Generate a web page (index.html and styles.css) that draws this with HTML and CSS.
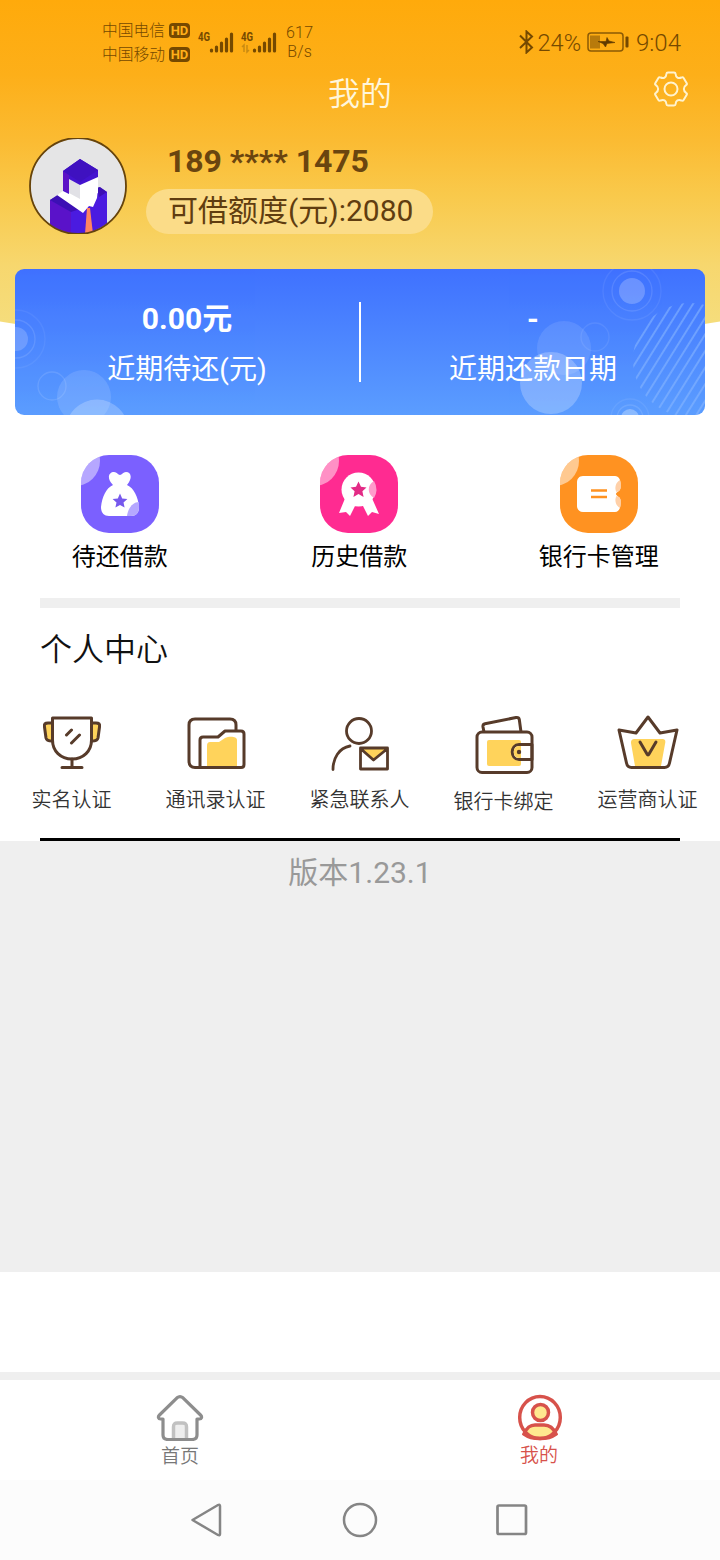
FILE: index.html
```html
<!DOCTYPE html>
<html lang="zh-CN">
<head>
<meta charset="utf-8">
<title>我的</title>
<link rel="stylesheet" href="styles.css">
</head>
<body>
<div class="screen">
  <header class="hero">
    <div class="status">
      <div class="carriers">
        <div class="carrier">中国电信<svg width="22" height="15" viewBox="0 0 22 15"><rect width="21" height="15" rx="4" fill="#754900"/><text x="10.5" y="12.3" class="hd">HD</text></svg></div>
        <div class="carrier">中国移动<svg width="22" height="15" viewBox="0 0 22 15"><rect width="21" height="15" rx="4" fill="#754900"/><text x="10.5" y="12.3" class="hd">HD</text></svg></div>
      </div>
      <svg class="signals" width="82" height="26" viewBox="0 0 82 26">
        <g fill="none" stroke="#754900" stroke-width="3.2" stroke-linecap="round">
          <path d="M14.500 22v-1M19.500 22v-4M24.500 22v-8M29.500 22v-12M34.500 22v-17"/>
          <path d="M57.500 22v-1M62.500 22v-4M67.500 22v-8M72.500 22v-12M77.500 22v-17"/>
        </g>
        <text x="1" y="11.500" class="g4" textLength="12" lengthAdjust="spacingAndGlyphs">4G</text>
        <text x="44" y="11.500" class="g4" textLength="12" lengthAdjust="spacingAndGlyphs">4G</text>
        <path d="M45 18l2-2v7M50 16v7l2-2" fill="none" stroke="#c98a12" stroke-width="1.500"/>
      </svg>
      <div class="speed">617<br>B/s</div>
      <div class="status-right">
        <svg width="17" height="24" viewBox="0 0 17 24"><path d="M2 5.500l12 12L8.500 22.500V1.500L14 6.500 2 18" fill="none" stroke="#754900" stroke-width="2"/></svg>
        <span class="pct">24%</span>
        <svg width="42" height="20" viewBox="0 0 42 20"><rect x="1" y="1" width="35" height="18" rx="3" fill="none" stroke="#8b5a05" stroke-width="1.500"/><rect x="3" y="3.500" width="10" height="13" fill="#b87a0b"/><path d="M11 9.500l8 0 1-4 2 3.500 6 1.500-8 1-1.500 3.500-2.500-3.500z" fill="#603a00" stroke="#603a00" stroke-width=".6"/><rect x="38.500" y="4.500" width="3" height="11" rx="1" fill="#754900"/></svg>
        <span class="clock">9:04</span>
      </div>
    </div>
    <div class="titlebar">
      <h1>我的</h1>
      <svg class="gear" width="36" height="36" viewBox="0 0 36 36"><g fill="none" stroke="#fff3cf" stroke-width="2" stroke-linejoin="round"><path d="M15 1.500h6q1.500 0 1.600 1.500c.2 3.500 2.800 5 5.800 3.500q1.400-.8 2.200.5l3 5q.8 1.400-.5 2.200c-3 2-3 5.600 0 7.600q1.300.8.5 2.200l-3 5q-.8 1.300-2.200.5c-3-1.500-5.600 0-5.800 3.500q-.1 1.500-1.600 1.500h-6q-1.500 0-1.600-1.500c-.2-3.500-2.800-5-5.800-3.500q-1.400.8-2.200-.5l-3-5q-.8-1.400.5-2.200c3-2 3-5.600 0-7.600q-1.300-.8-.5-2.200l3-5q.8-1.300 2.200-.5c3 1.500 5.600 0 5.800-3.500q.1-1.500 1.600-1.500z"/><circle cx="18" cy="18" r="6.500"/></g></svg>
    </div>
    <div class="profile">
      <svg class="avatar" width="98" height="96" viewBox="0 0 98 96">
        <defs><clipPath id="face"><circle cx="49" cy="48" r="47.500"/></clipPath></defs>
        <g clip-path="url(#face)">
          <rect width="98" height="96" fill="#e5e5e6"/>
          <path d="M21 62l9-5 24 14 16-22 8 5v42H21z" fill="#4a1be0"/>
          <path d="M21 62l21 11v23H21z" fill="#5a12c9"/>
          <path d="M21 62l9-6 24 14-12 4z" fill="#3c10b4"/>
          <path d="M68 50l3-1 7 5-8 5z" fill="#3c10b4"/>
          <path d="M28 57l6-4 18-2 17-1-1 10-4 9-4-1-6 7z" fill="#fff"/>
          <path d="M34 33l17-12 18 11v8l-18 8-11-6v14l-6-3z" fill="#4413cf"/>
          <path d="M34 33l6 4v18l-6-3z" fill="#5c12c6"/>
          <path d="M34 33l17-12 18 11-18 12z" fill="#3f11c0"/>
          <path d="M51 47l18-8v16l-18 7z" fill="#fff"/>
          <path d="M40 41l11 6v14l-11-6z" fill="#e1e1e6"/>
          <path d="M58 70h3l3 26h-8z" fill="#ff8461"/>
        </g>
        <circle cx="49" cy="48" r="48" fill="none" stroke="#65430d" stroke-width="1.800"/>
      </svg>
      <div class="account">
        <div class="phone">189 **** 1475</div>
        <div class="quota">可借额度(元):2080</div>
      </div>
    </div>
  </header>

  <section class="card">
    <svg class="card-art" width="690" height="146" viewBox="0 0 690 146">
      <defs><pattern id="hatch" width="8.800" height="20" patternUnits="userSpaceOnUse" patternTransform="rotate(32)"><rect x="3" width="1.800" height="20" fill="#8ab8ff"/></pattern></defs>
      <g fill="#fff">
        <circle cx="1" cy="70" r="12" opacity=".18"/><circle cx="69" cy="128" r="27" opacity=".12"/><circle cx="82" cy="162" r="31.500" opacity=".22"/>
        <circle cx="617" cy="22" r="13" opacity=".22"/><circle cx="549" cy="79" r="27" opacity=".1"/><circle cx="536" cy="114" r="31" opacity=".24"/><circle cx="615" cy="149" r="9" opacity=".3"/>
      </g>
      <g fill="none" stroke="#fff" stroke-width="1.300" opacity=".11">
        <circle cx="1" cy="70" r="19"/><circle cx="1" cy="70" r="29" opacity=".5"/><circle cx="37" cy="117" r="14"/>
        <circle cx="617" cy="22" r="20"/><circle cx="617" cy="22" r="29" opacity=".6"/><circle cx="580" cy="68" r="14" opacity=".7"/><circle cx="615" cy="149" r="13"/><circle cx="615" cy="149" r="19" opacity=".6"/>
      </g>
      <circle cx="675" cy="91" r="57" fill="url(#hatch)" opacity=".6"/>
    </svg>
    <div class="stat"><strong>0.00元</strong><span>近期待还(元)</span></div>
    <div class="rule"></div>
    <div class="stat"><strong>-</strong><span>近期还款日期</span></div>
  </section>

  <nav class="loans">
    <div class="loan">
      <svg width="78" height="78" viewBox="0 0 78 78"><defs><clipPath id="tile"><rect width="78" height="78" rx="28"/></clipPath></defs><g clip-path="url(#tile)"><rect width="78" height="78" fill="#7b60ff"/><circle cx="-6" cy="6" r="25" fill="#fff" opacity=".45"/></g>
        <path d="M32 30C25 23 28 17 33 17c3 0 4 3 6 3s3-3 6-3c5 0 7 6 1 13 7 3 11 12 12 22 0 6-3 9-8 9H28c-5 0-8-3-8-9 1-10 5-19 12-22z" fill="#fff"/><path d="M58 47c-6 0-11 6-12 14h4c6 0 8-4 8-9z" fill="#b5a7ff"/><path d="M39 38.500l2.200 4.900 5.200.5-3.900 3.500 1.100 5.200-4.600-2.700-4.600 2.700 1.100-5.200-3.900-3.500 5.200-.5z" fill="#7658ed"/></svg>
      <span>待还借款</span>
    </div>
    <div class="loan">
      <svg width="78" height="78" viewBox="0 0 78 78"><g clip-path="url(#tile)"><rect width="78" height="78" fill="#ff2b91"/><circle cx="-6" cy="6" r="25" fill="#fff" opacity=".48"/></g>
        <path d="M26 41l-7 17 7-1 4 4 5-10h8l5 10 4-4 7 2-8-18z" fill="#fff"/><circle cx="38.500" cy="34.500" r="17" fill="#fff"/><path d="M54 26a17 17 0 0 1 0 17c-7-4-7-13 0-17z" fill="#ff9bcb"/><path d="M38.500 26.500l2.500 5.300 5.500.6-4.100 3.800 1.200 5.700-5.100-3-5.100 3 1.200-5.700-4.100-3.800 5.500-.6z" fill="#e32b86"/></svg>
      <span>历史借款</span>
    </div>
    <div class="loan">
      <svg width="78" height="78" viewBox="0 0 78 78"><g clip-path="url(#tile)"><rect width="78" height="78" fill="#ff9221"/><circle cx="-6" cy="6" r="25" fill="#fff" opacity=".5"/></g>
        <path d="M23 21h32c4 0 5.500 4 5.500 7v5c0 3-4.500 4-4.500 6s4.500 3 4.500 6v4c0 4-1.500 8-5.500 8H23c-4 0-6-3-6-6V27c0-3 2-6 6-6z" fill="#fff"/><path d="M60 25c1 5 1 9-1 11l-2.500 1C54 33 56 27 60 25zM60 53c1-5 1-9-1-11l-2.500-1C54 45 56 51 60 53z" fill="#ffd0a8"/><path d="M31 35.500h16M31 42h16" stroke="#ff9221" stroke-width="2.400"/></svg>
      <span>银行卡管理</span>
    </div>
  </nav>

  <section class="center">
    <h2>个人中心</h2>
    <div class="services">
      <div class="service"><svg width="64" height="64" viewBox="0 0 64 64"><g fill="none" stroke="#573b2a" stroke-width="3" stroke-linejoin="round" stroke-linecap="round"><path d="M12 11H8c-3 0-4 1-3.500 4l1.500 11c.4 2 2 3 6 3M52 11h4c3 0 4 1 3.500 4L58 26c-.4 2-2 3-6 3" fill="#ffd35b"/><path fill="#fff" d="M12.500 6h39v22c0 11-8 19-19.500 19S12.500 39 12.500 28z"/><path d="M32 47v8.500M22 55.500h20M26.500 23l5-5M31.500 31l8-8"/></g></svg><span>实名认证</span></div>
      <div class="service"><svg width="64" height="64" viewBox="0 0 64 64"><path d="M23 34c0-3 1-4 3-4h9l6-4c4-2 12-2 12 2v27H23z" fill="#ffd35b"/><g fill="none" stroke="#573b2a" stroke-width="3" stroke-linejoin="round"><path d="M52 19v-6c0-4-2-6-6-6H11c-4 0-6 2-6 6v36c0 4 2 6.500 6 6.500h46c2 0 3-1 3-3V22c0-2-1-3-3-3H41l-7 6H19c-2 0-3 1-3 3v28"/></g></svg><span>通讯录认证</span></div>
      <div class="service"><svg width="64" height="64" viewBox="0 0 64 64"><path d="M33 36h26L45.500 48z" fill="#ffd35b"/><g fill="none" stroke="#573b2a" stroke-width="2.800" stroke-linejoin="round" stroke-linecap="round"><circle cx="31" cy="19" r="12.500"/><path d="M22 34C11 36 5 46 5 57.500"/><path d="M32.500 36h27v21h-27zM33 37l12.500 11L59 37"/></g></svg><span>紧急联系人</span></div>
      <div class="service lower"><svg width="64" height="64" viewBox="0 0 64 64"><rect x="15" y="26" width="34" height="26" rx="2" fill="#ffd35b"/><g fill="none" stroke="#573b2a" stroke-width="3" stroke-linejoin="round"><path d="M12 18l-1-5c-.3-2 .5-3 2-3.300L44 3.500c2-.3 3 .5 3.300 2L49 18"/><path d="M60 30.500H47c-9 0-9 15 0 15h13z" fill="#fff"/><path d="M49 32h-2c-7 0-7 12 0 12h2z" fill="#ffd35b" stroke="none"/><rect x="5" y="18" width="55" height="40.500" rx="5"/></g><circle cx="47" cy="38" r="2.200" fill="#573b2a"/></svg><span>银行卡绑定</span></div>
      <div class="service"><svg width="64" height="64" viewBox="0 0 64 64"><path d="M15 31c0-3 1-4 4-4h26c4 0 5 1 4 5l-4 22c-.5 2-1 2-3 2H22c-2 0-2.500 0-3-2z" fill="#ffd35b"/><g fill="none" stroke="#573b2a" stroke-width="3" stroke-linejoin="round" stroke-linecap="round"><path d="M32 5L20 21 3 18l7.500 33c.6 3 2 4.500 5 4.500h33c3 0 4.400-1.500 5-4.500L61 18l-17 3z"/><path d="M24 30l7 12q1 2 2 0l7-12"/></g></svg><span>运营商认证</span></div>
    </div>
    <div class="line"></div>
  </section>

  <div class="version">版本1.23.1</div>
  <div class="blank"></div>

  <nav class="tabs">
    <div class="tab"><svg width="48" height="48" viewBox="0 0 48 48"><path d="M17.500 46V34c0-3 1-4 4-4h5c3 0 4 1 4 4v12" fill="#eee" stroke="#c1c1c1" stroke-width="3.500"/><path d="M21 4.800c2-1.600 4-1.600 6 0L44.500 22c2 2 1 4-1 4H41v16c0 3-2 4.500-5 4.500H12c-3 0-5-1.500-5-4.500V26H4.500c-2 0-3-2-1-4z" fill="none" stroke="#8d8d8d" stroke-width="3.200" stroke-linejoin="round"/></svg><span>首页</span></div>
    <div class="tab on"><svg width="48" height="48" viewBox="0 0 48 48"><g stroke="#d7524b" stroke-width="3.500" fill="#ffe88f"><path d="M8 41c3-7 6-9 11-9h9c5 0 9 2 12 9-8 6-24 6-32 0z"/><circle cx="24.500" cy="19.500" r="8"/><ellipse cx="24" cy="24.500" rx="20.300" ry="21" fill="none"/></g></svg><span>我的</span></div>
  </nav>
  <div class="sysnav">
    <svg width="40" height="40" viewBox="0 0 40 40"><path d="M4.500 20L30 5q2-1 2 1v28q0 2-2 1z" fill="none" stroke="#858585" stroke-width="2.500" stroke-linejoin="round"/></svg>
    <svg width="40" height="40" viewBox="0 0 40 40"><circle cx="20" cy="20" r="16" fill="none" stroke="#858585" stroke-width="2.500"/></svg>
    <svg width="40" height="40" viewBox="0 0 40 40"><rect x="5.500" y="5.500" width="28.500" height="28.500" rx="1.500" fill="none" stroke="#858585" stroke-width="2.700"/></svg>
  </div>
</div>
</body>
</html>
```
FILE: styles.css
```css
* { box-sizing: border-box; }
body {
  margin: 0;
  background: #fff;
  font-family: Roboto, "Noto Sans CJK SC", sans-serif;
}
svg { display: block; flex: none; }
h1, h2 { margin: 0; font-weight: 350; }
.screen { width: 720px; height: 1560px; overflow: hidden; display: flex; flex-direction: column; }

.hero { position: relative; height: 269px; flex: none; }
.hero::before {
  content: "";
  position: absolute;
  top: 0; left: 0; right: 0;
  height: 352px;
  z-index: -1;
  background: linear-gradient(#ffaa0b 0, #fdaf19 75px, #fbbb32 140px, #f9c94b 195px, #f7d76e 265px, #f5dd7c 325px);
  clip-path: ellipse(900px 340px at 50% 10px);
}

.status { display: flex; align-items: flex-start; height: 66px; padding: 17px 40px 0 102px; color: #754900; }
.carrier { display: flex; align-items: center; gap: 4px; height: 24px; font-size: 15.750px; font-weight: 300; }
.carrier svg { margin-top: 2px; }
.hd { font: 700 13px Roboto, sans-serif; fill: #ffb01a; text-anchor: middle; }
.g4 { font: 700 13.500px Roboto, sans-serif; fill: #754900; }
.signals { margin: 12px 0 0 6px; }
.speed { margin: 6px 0 0 7px; font-size: 16px; line-height: 19px; text-align: center; font-weight: 300; letter-spacing: .2px; }
.status-right { display: flex; align-items: center; height: 26px; margin: 12px -1px 0 auto; font-size: 24px; }
.pct { margin: 2px 6px 0 3px; font-size: 23.500px; font-weight: 350; }
.clock { margin: 2px 0 0 7px; font-weight: 350; }

.titlebar { display: grid; grid-template-columns: 1fr auto 1fr; align-items: start; height: 70px; padding-right: 31px; color: #fff6dc; }
.titlebar h1 { grid-column: 2; margin: 6px 0 0 31px; font-size: 32px; line-height: 44px; }
.gear { justify-self: end; margin-top: 5px; }

.profile { display: flex; padding: 2px 0 0 29px; }
.account { margin-left: 19px; color: #603d10; }
.phone { margin: 0 0 0 21px; height: 51px; font-size: 32px; line-height: 46px; font-weight: 700; color: #6a450f; letter-spacing: -.050px; }
.quota { width: 287px; height: 45px; padding-left: 22px; border-radius: 23px; background: #fbdc88; font-size: 30px; line-height: 44px; white-space: nowrap; }

.card {
  position: relative;
  display: grid;
  grid-template-columns: 1fr 2px 1fr;
  width: 690px; height: 146px;
  margin: 0 auto;
  flex: none;
  border-radius: 9px;
  overflow: hidden;
  background: linear-gradient(#3f71ff, #5b9dff);
  color: #fff;
}
.card-art { position: absolute; inset: 0; }
.stat { position: relative; display: flex; flex-direction: column; align-items: center; padding-top: 27px; }
.stat strong { font-size: 30px; line-height: 46px; font-weight: 700; }
.stat span { margin-top: 6px; font-size: 28px; line-height: 44px; }
.rule { height: 80px; margin-top: 33px; background: #fff; }

.loans { display: grid; grid-template-columns: repeat(3, 239.500px); height: 183px; padding-top: 40px; flex: none; }
.loan { display: flex; flex-direction: column; align-items: center; gap: 6px; font-size: 24px; line-height: 36px; color: #000; }

.center { height: 243px; flex: none; margin: 0; }
.center::before { content: ""; display: block; height: 10px; margin: 0 40px; background: #efefef; }
.center h2 { height: 104px; padding: 18px 40px 0; font-size: 32px; line-height: 48px; color: #111; }
.services { display: grid; grid-template-columns: repeat(5, 144px); width: 720px; height: 126px; margin-left: -.500px; }
.service { display: flex; flex-direction: column; align-items: center; font-size: 20px; line-height: 30px; font-weight: 350; color: #333; }
.service span { margin-top: 9px; }
.service.lower { padding-top: 2px; }
.line { height: 3px; margin: 0 40px; background: #000; }

.version { height: 431px; padding-top: 10px; flex: none; background: #efefef; color: #999; font-size: 30px; line-height: 44px; text-align: center; }
.blank { height: 100px; flex: none; }
.tabs { display: grid; grid-template-columns: 1fr 1fr; height: 108px; padding-top: 13px; flex: none; border-top: 8px solid #efefef; }
.tab { display: flex; flex-direction: column; align-items: center; font-size: 19px; line-height: 28px; font-weight: 350; color: #777; }
.tab span { margin-top: 2px; }
.tab.on { color: #d7524b; }
.tab.on span { margin: 1px 2px 0 0; }
.sysnav { display: flex; justify-content: center; align-items: center; gap: 112px; height: 80px; flex: none; background: #fcfcfc; }
```
